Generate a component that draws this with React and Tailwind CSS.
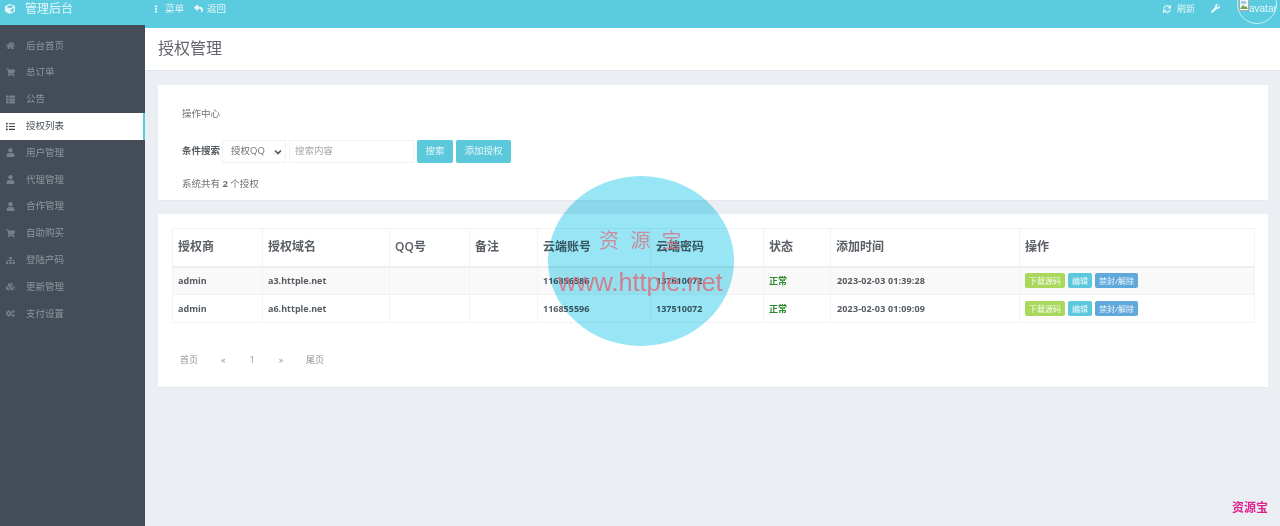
import React from "react";
import { FaHome, FaShoppingCart, FaList, FaThList, FaUser, FaSitemap, FaCubes, FaCogs, FaCube, FaEllipsisV, FaReply, FaSync, FaWrench } from "react-icons/fa";

const nav = [
  [FaHome, "后台首页"],
  [FaShoppingCart, "总订单"],
  [FaThList, "公告"],
  [FaList, "授权列表", true],
  [FaUser, "用户管理"],
  [FaUser, "代理管理"],
  [FaUser, "合作管理"],
  [FaShoppingCart, "自助购买"],
  [FaSitemap, "登陆产码"],
  [FaCubes, "更新管理"],
  [FaCogs, "支付设置"],
];
const rows = [
  ["admin", "a3.httple.net", "116856586", "137610072", "2023-02-03 01:39:28", true],
  ["admin", "a6.httple.net", "116855596", "137510072", "2023-02-03 01:09:09", false],
];
const heads = ["授权商", "授权域名", "QQ号", "备注", "云端账号", "云端密码", "状态", "添加时间", "操作"];

function Tag({ cls, children }) {
  return <span className={`inline-block h-[15px] leading-[15px] px-[4px] rounded-[2px] text-white/90 text-[8px] font-normal ${cls}`}>{children}</span>;
}

export default function App() {
  return (
    <div className="relative flex h-[526px] w-[1280px] overflow-hidden bg-[#ebeff4] text-[#6f7275] font-['Open_Sans','Noto_Sans_CJK_SC',sans-serif] text-[9.5px]">
      <aside className="flex w-[145px] shrink-0 flex-col bg-[#434c57]">
        <div className="flex h-[25px] items-start bg-[#5bcbdf] pl-[5px] pt-[2px] text-[#e6f7fa]">
          <FaCube className="text-[10px] mt-[2px]" />
          <span className="ml-[10px] text-[12px] leading-[13px]">管理后台</span>
        </div>
        <nav className="pt-[7.4px]">
          {nav.map(([Icon, label, active]) => (
            <div key={label} className={`flex h-[26.8px] items-center pl-[6px] ${active ? "bg-white text-[#4b535c] border-r-[2px] border-[#5bcbdf]" : "text-[#8f969e]"}`}>
              <span className={`flex w-[20px] shrink-0 items-center ${active ? "text-[#3a4048]" : "text-[#78808a]"}`}><Icon className="text-[9px]" /></span>
              <span>{label}</span>
            </div>
          ))}
        </nav>
      </aside>
      <div className="flex min-w-0 flex-1 flex-col">
        <header className="flex h-[28px] shrink-0 items-start bg-[#5bcbdf] pt-[3px] text-[#e6f7fa]">
          <FaEllipsisV className="ml-[7px] mt-[2px] text-[8px]" />
          <span className="ml-[5px] text-[9.5px] leading-[12px]">菜单</span>
          <FaReply className="ml-[10px] mt-[1px] text-[9px]" />
          <span className="ml-[4px] text-[9.5px] leading-[12px]">返回</span>
          <FaSync className="ml-auto mt-[2px] text-[8px]" />
          <span className="ml-[6px] text-[9px] leading-[12px]">刷新</span>
          <FaWrench className="ml-[16px] mt-[1px] text-[9px]" />
          <div className="relative ml-[17px] mr-[3px] -mt-[19px] flex h-[40px] w-[40px] shrink-0 items-start rounded-full border border-[#c6f0f6] pt-[18px]">
            <span className="flex items-center whitespace-nowrap pl-[1px] text-[10px] leading-[12px] font-['Liberation_Sans',sans-serif]">
              <svg width="10" height="12" viewBox="0 0 10 12" className="-mt-[8px] shrink-0">
                <rect x="0.5" y="0.5" width="9" height="11" fill="#f4f4f4" stroke="#aaa" />
                <path d="M1 10 L4 6 L6 8 L7 7 L9 10 Z" fill="#6aa84f" />
                <rect x="2" y="2" width="5" height="3" fill="#a8c7ef" />
              </svg>
              avatar
            </span>
          </div>
        </header>
        <div className="flex h-[43px] shrink-0 items-start border-b border-[#e1e5ec] bg-white pl-[13px] pt-[12px]">
          <h1 className="text-[16px] font-normal leading-[17px] text-[#62666b]">授权管理</h1>
        </div>
        <main className="flex flex-col gap-[13px] pl-[13px] pr-[12px] pt-[14px]">
          <section className="h-[116px] bg-white pl-[24px] border-b border-[#e6e8f0]">
            <p className="pt-[22.5px] leading-[12px]">操作中心</p>
            <div className="mt-[20.5px] flex h-[23px] items-center">
              <b className="font-bold text-[#555b61]">条件搜索</b>
              <div className="ml-[2px] flex h-[23px] w-[64px] items-center justify-between border border-[#f0f2f4] pl-[8px] pr-[3px]">
                <span>授权QQ</span>
                <svg width="8" height="6" viewBox="0 0 8 6"><path d="M1 1.5 L4 4.5 L7 1.5" fill="none" stroke="#555" strokeWidth="1.6" /></svg>
              </div>
              <div className="ml-[3px] flex h-[23px] w-[125px] items-center border border-[#f0f2f4] pl-[5px] text-[#a5a9ad]">搜索内容</div>
              <span className="ml-[3px] flex h-[23px] w-[36px] items-center justify-center rounded-[2px] bg-[#5bc8dc] text-[#e6f7fa]">搜索</span>
              <span className="ml-[3px] flex h-[23px] w-[55px] items-center justify-center rounded-[2px] bg-[#5bc8dc] text-[#e6f7fa]">添加授权</span>
            </div>
            <p className="mt-[14.5px] leading-[12px]">系统共有 <b className="font-bold">2</b> 个授权</p>
          </section>
          <section className="h-[174px] bg-white px-[14px] pt-[14px] border-b border-[#e6e8f0]">
            <table className="w-[1082px] table-fixed border-collapse">
              <colgroup>
                {[90, 127, 80, 68, 113, 113, 67, 189, 235].map((w, i) => <col key={i} style={{ width: w }} />)}
              </colgroup>
              <thead>
                <tr className="h-[38px]">
                  {heads.map((h) => (
                    <th key={h} className="border border-[#f2f3f5] border-b-[2px] border-b-[#eceef0] pl-[5px] text-left text-[12px] font-semibold text-[#5a5f65]">{h}</th>
                  ))}
                </tr>
              </thead>
              <tbody>
                {rows.map((r) => (
                  <tr key={r[1]} className={`h-[28px] font-bold text-[#555b61] text-[9px] ${r[5] ? "bg-[#f9f9f9]" : ""}`}>
                    <td className="border border-[#f2f3f5] pl-[5px]">{r[0]}</td>
                    <td className="border border-[#f2f3f5] pl-[5px]">{r[1]}</td>
                    <td className="border border-[#f2f3f5]"></td>
                    <td className="border border-[#f2f3f5]"></td>
                    <td className="border border-[#f2f3f5] pl-[5px]">{r[2]}</td>
                    <td className="border border-[#f2f3f5] pl-[5px]">{r[3]}</td>
                    <td className="border border-[#f2f3f5] pl-[5px] text-[#2c8a2c]">正常</td>
                    <td className="border border-[#f2f3f5] pl-[6px] tracking-[0.15px]">{r[4]}</td>
                    <td className="border border-[#f2f3f5] pl-[5px]">
                      <div className="flex gap-[3px]">
                        <Tag cls="bg-[#a9d85d]">下载源码</Tag>
                        <Tag cls="bg-[#5bc8dc]">编辑</Tag>
                        <Tag cls="bg-[#5fa8dc]">禁封/解除</Tag>
                      </div>
                    </td>
                  </tr>
                ))}
              </tbody>
            </table>
            <div className="mt-[30px] flex items-center pl-[8px] text-[#8e9296] text-[9px]">
              <span>首页</span>
              <span className="ml-[23px]">«</span>
              <span className="ml-[24px]">1</span>
              <span className="ml-[24px]">»</span>
              <span className="ml-[23px]">尾页</span>
            </div>
          </section>
        </main>
      </div>
      <div className="absolute left-[548px] top-[176px] h-[170px] w-[186px] rounded-[50%] bg-[#98e6f5] mix-blend-multiply" />
      <div className="absolute left-[599px] top-[228px] text-[20px] leading-[26px] tracking-[3px] text-[#d9707f]/75">资 源 宝</div>
      <div className="absolute left-[558px] top-[269px] font-['Liberation_Sans',sans-serif] text-[25.3px] leading-[26px] text-[#d9707f]/85 whitespace-nowrap">www.httple.net</div>
      <div className="absolute left-[1232px] top-[500px] text-[12px] leading-[15px] font-semibold text-[#e0208c]">资源宝</div>
    </div>
  );
}
